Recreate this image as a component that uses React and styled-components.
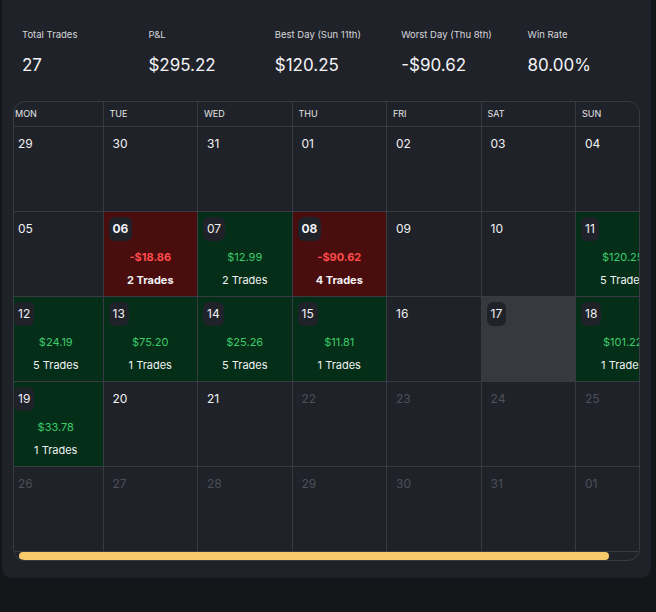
import React, { useEffect, useRef, useState } from 'react'
import styled, { createGlobalStyle } from 'styled-components'

const GlobalStyle = createGlobalStyle`
  body {
    margin: 0;
    background: #15161a;
    font-family: Inter, 'Noto Sans', sans-serif;
    color: #f1f1f3;
  }
`

const Page = styled.div`
  width: 656px;
  height: 612px;
  padding-left: 2px;
  box-sizing: border-box;
`

const Card = styled.div`
  width: 649px;
  height: 578px;
  background: #20222a;
  border-radius: 0 0 10px 10px;
  padding: 28px 11px 0;
  box-sizing: border-box;
`

const Stats = styled.div`
  display: grid;
  grid-template-columns: repeat(5, 126.4px);
  padding-left: 9px;
  margin-bottom: 24px;
`

const Stat = styled.div`
  display: flex;
  flex-direction: column;
  gap: 11px;
`

const StatLabel = styled.span`
  font-size: 9.5px;
  line-height: 14px;
  color: #d6d7db;
`

const StatValue = styled.span`
  font-size: 17px;
  line-height: 24px;
  color: #f3f3f5;
`

const Calendar = styled.div`
  border: 1px solid #393b43;
  border-radius: 12px;
  overflow: hidden;
`

const Viewport = styled.div`
  overflow: hidden;
`

const Grid = styled.div`
  display: grid;
  grid-template-columns: repeat(7, 94.5px);
  width: max-content;
`

const HeadCell = styled.div`
  height: 25px;
  box-sizing: border-box;
  border-right: 1px solid #393b43;
  border-bottom: 1px solid #393b43;
  padding-left: 6px;
  font-size: 9px;
  line-height: 24px;
  color: #e4e5e8;
`

const toneBg = {
  loss: '#4a0d0d',
  win: '#042e18',
  today: '#373940',
  plain: '#20222a',
}

const DayCell = styled.div`
  height: 85px;
  box-sizing: border-box;
  border-right: 1px solid #393b43;
  border-bottom: 1px solid #393b43;
  background: ${(p) => toneBg[p.$tone]};
  padding: 5px;
  display: flex;
  flex-direction: column;
  align-items: center;
`

const DateBadge = styled.span`
  align-self: flex-start;
  background: #20222a;
  border-radius: 6px;
  padding: 4px 4px;
  font-size: 12px;
  line-height: 16px;
  font-weight: ${(p) => (p.$bold ? 700 : 400)};
  color: ${(p) => (p.$faded ? '#4d4f57' : '#f1f1f3')};
`

const Amount = styled.span`
  margin-top: 8px;
  font-size: 11px;
  line-height: 16px;
  font-weight: ${(p) => (p.$loss ? 700 : 400)};
  color: ${(p) => (p.$loss ? '#ff4b4b' : '#3fcb6c')};
`

const TradeCount = styled.span`
  margin-top: 7px;
  font-size: 11px;
  line-height: 16px;
  font-weight: ${(p) => (p.$bold ? 700 : 400)};
  color: #f1f1f3;
  white-space: nowrap;
`

const ScrollTrack = styled.div`
  height: 8px;
`

const ScrollThumb = styled.div`
  height: 8px;
  background: #f8c96b;
  border-radius: 4px;
`

const stats = [
  { label: 'Total Trades', value: '27' },
  { label: 'P&L', value: '$295.22' },
  { label: 'Best Day (Sun 11th)', value: '$120.25' },
  { label: 'Worst Day (Thu 8th)', value: '-$90.62' },
  { label: 'Win Rate', value: '80.00%' },
]

const weekdays = ['MON', 'TUE', 'WED', 'THU', 'FRI', 'SAT', 'SUN']

const trades = {
  '06': { pnl: '-$18.86', count: 2, loss: true },
  '07': { pnl: '$12.99', count: 2 },
  '08': { pnl: '-$90.62', count: 4, loss: true },
  '11': { pnl: '$120.25', count: 5 },
  '12': { pnl: '$24.19', count: 5 },
  '13': { pnl: '$75.20', count: 1 },
  '14': { pnl: '$25.26', count: 5 },
  '15': { pnl: '$11.81', count: 1 },
  '18': { pnl: '$101.22', count: 1 },
  '19': { pnl: '$33.78', count: 1 },
}

const days = [
  '29', '30', '31', '01', '02', '03', '04',
  '05', '06', '07', '08', '09', '10', '11',
  '12', '13', '14', '15', '16', '17', '18',
  '19', '20', '21', '22', '23', '24', '25',
  '26', '27', '28', '29', '30', '31', '01',
]

const Day = ({ date, index }) => {
  const t = trades[date]
  const faded = index >= 24
  const tone = t ? (t.loss ? 'loss' : 'win') : index === 19 ? 'today' : 'plain'
  return (
    <DayCell $tone={tone}>
      <DateBadge $bold={t && t.loss} $faded={faded}>{date}</DateBadge>
      {t && (
        <>
          <Amount $loss={t.loss}>{t.pnl}</Amount>
          <TradeCount $bold={t.loss}>{t.count} Trades</TradeCount>
        </>
      )}
    </DayCell>
  )
}

const App = () => {
  const viewport = useRef(null)
  const [thumb, setThumb] = useState({ left: 0, width: 0 })

  useEffect(() => {
    const el = viewport.current
    if (!el) return
    el.scrollLeft = 5
    const ratio = el.clientWidth / el.scrollWidth
    setThumb({ left: el.scrollLeft * ratio, width: el.clientWidth * ratio })
  }, [])

  return (
    <Page>
      <GlobalStyle />
      <Card>
        <Stats>
          {stats.map((s) => (
            <Stat key={s.label}>
              <StatLabel>{s.label}</StatLabel>
              <StatValue>{s.value}</StatValue>
            </Stat>
          ))}
        </Stats>
        <Calendar>
          <Viewport ref={viewport}>
            <Grid>
              {weekdays.map((d) => (
                <HeadCell key={d}>{d}</HeadCell>
              ))}
              {days.map((d, i) => (
                <Day key={i} date={d} index={i} />
              ))}
            </Grid>
          </Viewport>
          <ScrollTrack>
            <ScrollThumb style={{ marginLeft: thumb.left, width: thumb.width }} />
          </ScrollTrack>
        </Calendar>
      </Card>
    </Page>
  )
}

export default App
